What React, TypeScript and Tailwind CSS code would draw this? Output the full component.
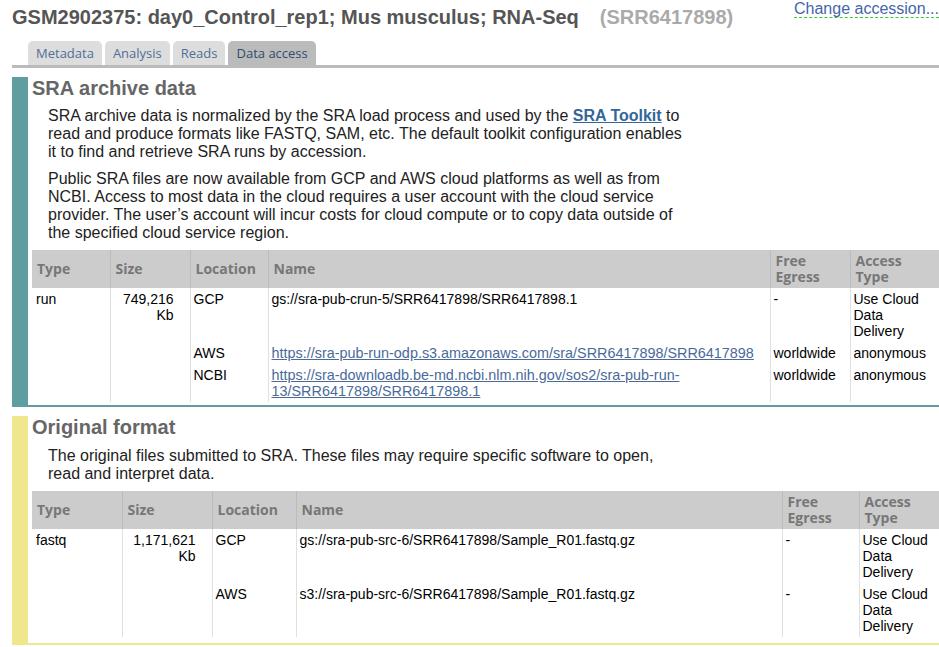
import React from "react";

const cellBase = "align-top px-[4px] py-[3px] border-l border-[#e0e0e0] first:border-l-0";
const subCell = "align-top pl-[3px] pr-[4px] py-[3px] border-l border-[#e0e0e0]";
const thBase = "align-middle text-left px-[5px] py-[3px] border-l border-[#bbbbbb] first:border-l-0 font-bold text-[14px] leading-[16px] text-[#777777]";
const linkCls = "text-[#4a6a9a] underline";

function Header() {
  return (
    <div className="flex items-start justify-between">
      <div className="pt-[5px] pl-[12px] text-[20px] leading-[24px] font-bold text-[#555555] whitespace-nowrap">
        GSM2902375: day0_Control_rep1; Mus musculus; RNA-Seq
        <span className="ml-[21px] text-[#aaaaaa]">(SRR6417898)</span>
      </div>
      <a className="mt-[0px] text-[16px] leading-[17px] text-[#4466aa] border-b border-dashed border-[#33cc33] whitespace-nowrap">
        Change accession...
      </a>
    </div>
  );
}

function Tabs() {
  const tabs = ["Metadata", "Analysis", "Reads", "Data access"];
  return (
    <div className="ml-[12px] mt-[12px] border-b-[3px] border-[#bbbbbb]">
      <div className="flex gap-[3px] pl-[16px]" style={{ fontFamily: '"Open Sans", sans-serif' }}>
        {tabs.map((t, i) => (
          <div
            key={t}
            className={
              "h-[24px] px-[8px] rounded-t-[5px] text-[13px] leading-[24px] " +
              (i === 3 ? "bg-[#bbbbbb] text-[#2e4d6b]" : "bg-[#dddddd] text-[#4f6f96]")
            }
          >
            {t}
          </div>
        ))}
      </div>
    </div>
  );
}

function Section1() {
  return (
    <div className="flex ml-[12px] mt-[9px]">
      <div className="w-[16px] shrink-0 bg-[#5f9ea0]" />
      <div className="flex-1 border-b-2 border-[#5f9ea0] pl-[4px] pb-[3px]">
        <h2 className="text-[20px] leading-[22px] font-bold text-[#666666]">SRA archive data</h2>
        <p className="ml-[16px] mt-[8px] w-[637px] text-[16px] leading-[18px] text-[#222222]">
          SRA archive data is normalized by the SRA load process and used by the{" "}
          <a className="font-bold text-[#336699] underline">SRA Toolkit</a> to read and produce formats like FASTQ,
          SAM, etc. The default toolkit configuration enables it to find and retrieve SRA runs by accession.
        </p>
        <p className="ml-[16px] mt-[9px] w-[637px] text-[16px] leading-[18px] text-[#222222]">
          Public SRA files are now available from GCP and AWS cloud platforms as well as from NCBI. Access to most
          data in the cloud requires a user account with the cloud service provider. The user’s account will incur
          costs for cloud compute or to copy data outside of the specified cloud service region.
        </p>
        <table className="mt-[8px] w-[907px] table-fixed border-collapse text-[14px] leading-[16px] text-black">
          <colgroup>
            <col className="w-[78px]" />
            <col className="w-[80px]" />
            <col className="w-[78px]" />
            <col className="w-[502px]" />
            <col className="w-[80px]" />
            <col className="w-[89px]" />
          </colgroup>
          <thead className="bg-[#cccccc]" style={{ fontFamily: '"Open Sans", sans-serif' }}>
            <tr>
              <th className={thBase}>Type</th>
              <th className={thBase}>Size</th>
              <th className={thBase}>Location</th>
              <th className={thBase}>Name</th>
              <th className={thBase}>Free Egress</th>
              <th className={thBase}>Access Type</th>
            </tr>
          </thead>
          <tbody>
            <tr>
              <td className={cellBase} rowSpan={3}>run</td>
              <td className={cellBase + " text-right pr-[16px]"} rowSpan={3}>749,216 Kb</td>
              <td className={subCell}>GCP</td>
              <td className={subCell}>gs://sra-pub-crun-5/SRR6417898/SRR6417898.1</td>
              <td className={subCell}>-</td>
              <td className={subCell}>Use Cloud Data Delivery</td>
            </tr>
            <tr>
              <td className={subCell}>AWS</td>
              <td className={subCell}>
                <a className={linkCls + " text-[14.4px]"}>https://sra-pub-run-odp.s3.amazonaws.com/sra/SRR6417898/SRR6417898</a>
              </td>
              <td className={subCell}>worldwide</td>
              <td className={subCell}>anonymous</td>
            </tr>
            <tr>
              <td className={subCell}>NCBI</td>
              <td className={subCell}>
                <a className={linkCls + " text-[14.4px]"}>https://sra-downloadb.be-md.ncbi.nlm.nih.gov/sos2/sra-pub-run-13/SRR6417898/SRR6417898.1</a>
              </td>
              <td className={subCell}>worldwide</td>
              <td className={subCell}>anonymous</td>
            </tr>
          </tbody>
        </table>
      </div>
    </div>
  );
}

function Section2() {
  return (
    <div className="flex ml-[12px] mt-[9px]">
      <div className="w-[16px] shrink-0 bg-[#f0e68c]" />
      <div className="flex-1 border-b-2 border-[#f0e68c] pl-[4px] pb-[6px]">
        <h2 className="text-[20px] leading-[22px] font-bold text-[#666666]">Original format</h2>
        <p className="ml-[16px] mt-[9px] w-[637px] text-[16px] leading-[18px] text-[#222222]">
          The original files submitted to SRA. These files may require specific software to open, read and interpret
          data.
        </p>
        <table className="mt-[8px] w-[907px] table-fixed border-collapse text-[14px] leading-[16px] text-black">
          <colgroup>
            <col className="w-[90px]" />
            <col className="w-[90px]" />
            <col className="w-[84px]" />
            <col className="w-[486px]" />
            <col className="w-[77px]" />
            <col className="w-[80px]" />
          </colgroup>
          <thead className="bg-[#cccccc]" style={{ fontFamily: '"Open Sans", sans-serif' }}>
            <tr>
              <th className={thBase}>Type</th>
              <th className={thBase}>Size</th>
              <th className={thBase}>Location</th>
              <th className={thBase}>Name</th>
              <th className={thBase}>Free Egress</th>
              <th className={thBase}>Access Type</th>
            </tr>
          </thead>
          <tbody>
            <tr>
              <td className={cellBase} rowSpan={2}>fastq</td>
              <td className={cellBase + " text-right pr-[16px]"} rowSpan={2}>1,171,621 Kb</td>
              <td className={subCell}>GCP</td>
              <td className={subCell}>gs://sra-pub-src-6/SRR6417898/Sample_R01.fastq.gz</td>
              <td className={subCell}>-</td>
              <td className={subCell}>Use Cloud Data Delivery</td>
            </tr>
            <tr>
              <td className={subCell}>AWS</td>
              <td className={subCell}>s3://sra-pub-src-6/SRR6417898/Sample_R01.fastq.gz</td>
              <td className={subCell}>-</td>
              <td className={subCell}>Use Cloud Data Delivery</td>
            </tr>
          </tbody>
        </table>
      </div>
    </div>
  );
}

export default function App() {
  return (
    <div
      className="w-[939px] h-[647px] overflow-hidden bg-white"
      style={{ fontFamily: '"Liberation Sans", Arial, sans-serif' }}
    >
      <Header />
      <Tabs />
      <Section1 />
      <Section2 />
    </div>
  );
}
